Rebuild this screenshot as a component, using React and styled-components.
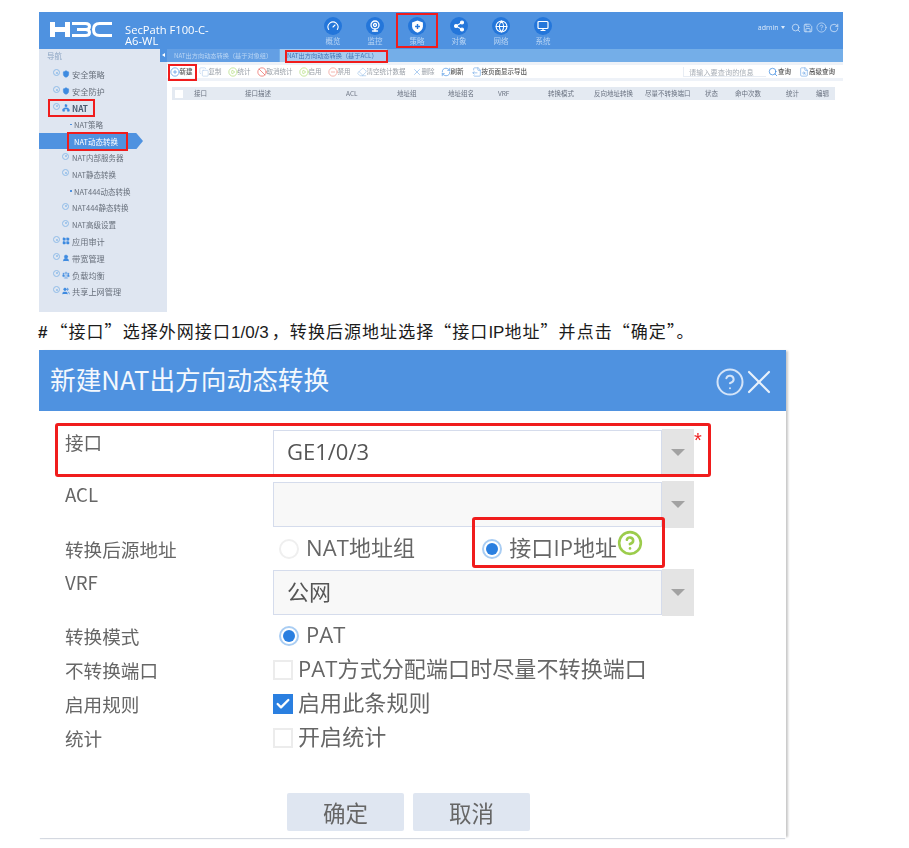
import styled, { createGlobalStyle } from "styled-components";
import {
  Ban,
  Check,
  CircleHelp,
  CirclePlay,
  CirclePlus,
  CircleMinus,
  Copy,
  Eraser,
  FileOutput,
  FileSearch,
  Gauge,
  Globe,
  Monitor,
  Network,
  RefreshCw,
  RotateCw,
  Save,
  Scale,
  Search,
  Share2,
  Shield,
  LayoutGrid,
  Users,
  UserRound,
  Webcam,
  X,
} from "lucide-react";

const CJK = `"Noto Sans CJK SC", "Noto Sans", sans-serif`;
const UI = `"Open Sans", "Noto Sans CJK SC", sans-serif`;

const Global = createGlobalStyle`
  body {
    margin: 0;
    background: #fff;
    font-family: ${UI};
  }
`;

const Page = styled.div`
  width: 909px;
  height: 848px;
  padding: 12px 0 0 39px;
  box-sizing: border-box;
  overflow: hidden;
`;

const Mark = styled.div`
  position: absolute;
  left: ${(p) => p.$x}px;
  top: ${(p) => p.$y}px;
  width: ${(p) => p.$w}px;
  height: ${(p) => p.$h}px;
  box-sizing: border-box;
  border: ${(p) => p.$b || 2}px solid #f01c1c;
  border-radius: ${(p) => p.$r || 0}px;
  pointer-events: none;
`;

/* top screenshot */
const Shot = styled.div`
  position: relative;
  width: 804px;
  height: 300px;
  filter: blur(0.35px);
`;

const Head = styled.header`
  height: 37px;
  background: #4f92e0;
  display: flex;
  align-items: flex-start;
  color: #fff;
`;

const Logo = styled.svg`
  width: 62px;
  height: 15px;
  margin: 10px 13px 0 11px;
  flex: none;
`;

const Product = styled.div`
  width: 187px;
  flex: none;
  margin-top: 12px;
  font-size: 11.2px;
  line-height: 11px;
`;

const Nav = styled.nav`
  display: flex;
`;

const NavItem = styled.div`
  width: 42px;
  display: flex;
  flex-direction: column;
  align-items: center;
  padding-top: 5px;
  font-family: ${CJK};
  font-size: 7.5px;
  line-height: 9px;
  color: #b9d5f4;
`;

const NavDisc = styled.div`
  width: 18px;
  height: 18px;
  border-radius: 50%;
  background: #2476da;
  display: flex;
  align-items: center;
  justify-content: center;
  margin-bottom: 1px;
`;

const HeadTools = styled.div`
  margin-left: auto;
  padding: 10px 4px 0 0;
  display: flex;
  align-items: center;
  gap: 2.5px;
  font-size: 7px;
  line-height: 9px;
  color: #dbe9fa;
`;

const Caret = styled.span`
  width: 0;
  height: 0;
  border: 2.5px solid transparent;
  border-top: 3px solid #dbe9fa;
  border-bottom: 0;
  margin: 0 3px 0 0;
`;

const Body = styled.div`
  display: flex;
  height: 263px;
`;

const Side = styled.aside`
  width: 128px;
  flex: none;
  background: #dfe6f1;
`;

const SideTitle = styled.div`
  height: 13px;
  padding-left: 8px;
  font-family: ${CJK};
  font-size: 7.5px;
  line-height: 13px;
  color: #8ea6c4;
  position: relative;
`;

const Handle = styled.span`
  position: absolute;
  right: 0;
  top: 0;
  width: 7px;
  height: 13px;
  background: #4f92e0;
  &::after {
    content: "";
    position: absolute;
    left: 2px;
    top: 4px;
    border: 2.5px solid transparent;
    border-right: 3px solid #fff;
    border-left: 0;
  }
`;

const Tree = styled.div`
  padding-top: 4px;
`;

const TreeRow = styled.div`
  height: 16.7px;
  display: flex;
  align-items: center;
  padding-left: ${(p) => p.$indent}px;
  font-family: ${CJK};
  font-size: ${(p) => (p.$level === 0 ? 8.2 : 7.5)}px;
  font-weight: ${(p) => (p.$bold ? 700 : 400)};
  color: ${(p) => (p.$active ? "#fff" : p.$bold ? "#4a5a70" : "#68707c")};
  background: ${(p) => (p.$active ? "#4f92e0" : "transparent")};
  width: ${(p) => (p.$active ? "104px" : "auto")};
  box-sizing: border-box;
  clip-path: ${(p) =>
    p.$active
      ? "polygon(0 0, 97px 0, 104px 50%, 97px 100%, 0 100%)"
      : "none"};
`;

const Ring = styled.span`
  width: 7px;
  height: 7px;
  border: 1px solid #90bce8;
  border-radius: 50%;
  box-sizing: border-box;
  margin-right: ${(p) => p.$gap}px;
  margin-top: -3px;
  position: relative;
  flex: none;
  &::after {
    content: "";
    position: absolute;
    left: 1.5px;
    top: 1.5px;
    width: 2px;
    height: 2px;
    background: #90bce8;
    border-radius: 50%;
  }
`;

const Dot = styled.span`
  width: 1.5px;
  height: 1.5px;
  background: #4f92e0;
  margin-right: 2.5px;
  flex: none;
`;

const TreeIcon = styled.span`
  display: flex;
  margin-right: 2px;
  flex: none;
`;

const Main = styled.main`
  flex: 1;
  background: #eef2f8;
  display: flex;
  flex-direction: column;
`;

const TabBar = styled.div`
  height: 13px;
  background: #74aee8;
  display: flex;
  font-family: ${CJK};
  font-size: 6.2px;
  line-height: 13px;
`;

const Tab = styled.div`
  width: ${(p) => p.$w}px;
  padding-left: ${(p) => p.$pad}px;
  box-sizing: border-box;
  background: ${(p) => (p.$on ? "#a9ccf0" : "#639fe4")};
  color: ${(p) => (p.$on ? "#4373b4" : "#b9d5f4")};
  margin-right: 1px;
`;

const Toolbar = styled.div`
  height: 13px;
  margin-top: 3px;
  background: #fff;
  display: flex;
  align-items: center;
  gap: 6px;
  padding: 0 8px 0 2.5px;
`;

const Tool = styled.div`
  display: flex;
  align-items: center;
  font-family: ${CJK};
  font-size: 6.5px;
  line-height: 9px;
  color: ${(p) => (p.$strong ? "#555" : "#9aa0a8")};
  font-weight: ${(p) => (p.$strong ? 500 : 400)};
  margin-left: ${(p) => p.$ml || 0};
`;

const SearchBox = styled.div`
  width: 83px;
  height: 10px;
  margin-left: auto;
  margin-right: -4px;
  padding-left: 5px;
  box-sizing: border-box;
  font-family: ${CJK};
  font-size: 7.2px;
  line-height: 10px;
  color: #aab0b8;
  border: solid #e8edf4;
  border-width: 0 0 1px 1px;
`;

const Panel = styled.div`
  flex: 1;
  margin-top: 3px;
  background: #fff;
  padding: 6px 8px 0 5px;
`;

const TableHead = styled.div`
  height: 13px;
  background: #e4eaf2;
  display: grid;
  grid-template-columns: 22px 51px 101px 51px 51px 50px 50px 46px 51px 60px 30px 51px 30px 1fr;
  align-items: center;
  font-family: ${CJK};
  font-size: 6.5px;
  line-height: 9px;
  color: #6a7280;
`;

const HeadBox = styled.span`
  width: 8px;
  height: 8px;
  background: #fff;
  margin-left: 3px;
`;

/* caption */
const Caption = styled.p`
  margin: 0 0 0 -1px;
  height: 38px;
  font-family: ${CJK};
  font-size: 17px;
  letter-spacing: 1.05px;
  line-height: 38px;
  color: #1b1b1b;
  white-space: nowrap;
`;

const Latin = styled.span`
  font-family: "Liberation Sans", sans-serif;
  letter-spacing: 0;
  font-weight: ${(p) => (p.$bold ? 700 : 400)};
  margin-right: ${(p) => p.$mr || 0}px;
`;

/* dialog */
const Dialog = styled.section`
  position: relative;
  width: 747px;
  height: 488px;
  background: #fff;
  box-shadow: 3px 0 2px -1px #c9c9c9, 0 2px 1px -1px #d5dae2;
  filter: blur(0.25px);
`;

const DialogHead = styled.header`
  height: 61px;
  background: #4f92e0;
  color: #f4f8fd;
  display: flex;
  align-items: center;
  padding: 0 7.5px 0 11px;
  font-family: ${CJK};
  font-size: 25.7px;
`;

const DialogTitle = styled.h2`
  margin: -5px 0 0;
  font-size: inherit;
  font-weight: 400;
`;

const HeadIcons = styled.div`
  margin-left: auto;
  margin-top: 3px;
  display: flex;
  align-items: center;
`;

const CloseIcon = styled(X)`
  margin-left: -6px;
`;

const Form = styled.div`
  padding: 19px 0 0 26px;
`;

const Row = styled.div`
  display: grid;
  grid-template-columns: 208px 1fr;
  height: ${(p) => p.$h}px;
  margin-top: ${(p) => p.$mt || 0}px;
  align-items: ${(p) => (p.$top ? "start" : "center")};
`;

const Label = styled.div`
  font-family: ${CJK};
  font-size: 18.6px;
  line-height: 24px;
  color: #666;
`;

const Select = styled.div`
  display: flex;
  align-items: flex-start;
`;

const Input = styled.div`
  width: 389px;
  height: 45px;
  box-sizing: border-box;
  background: ${(p) => (p.$disabled ? "#f8f8f8" : "#fff")};
  border: 1px solid #d5dcec;
  padding-left: 13px;
  font-family: ${UI};
  font-size: 22px;
  line-height: 41px;
  color: #555;
`;

const Drop = styled.div`
  width: 32px;
  height: 47px;
  margin-top: -1px;
  background: #e4e4e4;
  display: flex;
  align-items: center;
  justify-content: center;
  &::after {
    content: "";
    border: 7px solid transparent;
    border-top: 7px solid #a2a2a2;
    border-bottom: 0;
  }
`;

const Star = styled.span`
  color: #ee2222;
  font-family: "Liberation Sans", sans-serif;
  font-size: 20px;
  line-height: 20px;
`;

const Options = styled.div`
  display: flex;
  align-items: center;
  padding-left: ${(p) => p.$pad || 0}px;
`;

const Radio = styled.span`
  width: 20px;
  height: 20px;
  flex: none;
  box-sizing: border-box;
  border-radius: 50%;
  border: 2px solid ${(p) => (p.$on ? "#a9cdf3" : "#efefef")};
  display: flex;
  align-items: center;
  justify-content: center;
  margin-right: 7px;
  &::after {
    content: "";
    width: 12px;
    height: 12px;
    border-radius: 50%;
    background: ${(p) => (p.$on ? "#2a7fe0" : "transparent")};
  }
`;

const Box = styled.span`
  width: 20px;
  height: 20px;
  flex: none;
  box-sizing: border-box;
  background: ${(p) => (p.$on ? "#2a7fe0" : "#fff")};
  border: 2px solid ${(p) => (p.$on ? "#2a7fe0" : "#ececec")};
  display: flex;
  align-items: center;
  justify-content: center;
  margin-right: 5px;
`;

const OptText = styled.span`
  font-family: ${UI};
  font-size: 22px;
  letter-spacing: 0.1px;
  line-height: 30px;
  color: #666;
  margin-right: ${(p) => p.$mr || 0}px;
  margin-bottom: 4px;
`;

const GreenHelp = styled(CircleHelp)`
  margin: -12px 0 0 0;
`;

const Buttons = styled.div`
  display: flex;
  gap: 9px;
  margin: 38px 0 0 222px;
`;

const Btn = styled.div`
  width: 117px;
  height: 38px;
  background: #dfe6f1;
  border-radius: 2px;
  text-align: center;
  font-family: ${CJK};
  font-size: 22.5px;
  line-height: 38px;
  color: #666;
`;

const ShieldGlyph = () => (
  <svg width="13" height="13" viewBox="0 0 24 24">
    <path d="M12 1L22 4.5V12C22 17.5 17.5 21.5 12 23.5C6.5 21.5 2 17.5 2 12V4.5Z" fill="#fff" />
    <path d="M12 7.5V16.5M7.5 12H16.5" stroke="#2476da" strokeWidth="2.6" fill="none" />
  </svg>
);

const navItems = [
  { label: "概览", glyph: <Gauge size={12} color="#fff" strokeWidth={2.2} /> },
  { label: "监控", glyph: <Webcam size={12} color="#fff" strokeWidth={2.6} /> },
  { label: "策略", glyph: <ShieldGlyph /> },
  { label: "对象", glyph: <Share2 size={12} color="#fff" fill="#fff" strokeWidth={2.2} /> },
  { label: "网络", glyph: <Globe size={13} color="#fff" strokeWidth={2} /> },
  { label: "系统", glyph: <Monitor size={12} color="#fff" strokeWidth={2.4} /> },
];

const blue = "#3f8be0";

const tree = [
  { text: "安全策略", level: 0, Icon: Shield },
  { text: "安全防护", level: 0, Icon: Shield },
  { text: "NAT", level: 0, Icon: Network, bold: true },
  { text: "NAT策略", level: 2 },
  { text: "NAT动态转换", level: 2, active: true },
  { text: "NAT内部服务器", level: 1 },
  { text: "NAT静态转换", level: 1 },
  { text: "NAT444动态转换", level: 2 },
  { text: "NAT444静态转换", level: 1 },
  { text: "NAT高级设置", level: 1 },
  { text: "应用审计", level: 0, Icon: LayoutGrid },
  { text: "带宽管理", level: 0, Icon: UserRound },
  { text: "负载均衡", level: 0, Icon: Scale },
  { text: "共享上网管理", level: 0, Icon: Users },
];

const tools = [
  { text: "复制", Icon: Copy, color: "#b5cfee" },
  { text: "统计", Icon: CirclePlay, color: "#a6d86a" },
  { text: "取消统计", Icon: Ban, color: "#e8504a" },
  { text: "启用", Icon: CirclePlay, color: "#a6d86a" },
  { text: "禁用", Icon: CircleMinus, color: "#ee8a80" },
  { text: "清空统计数据", Icon: Eraser, color: "#9cc0e8" },
  { text: "删除", Icon: X, color: "#7fb0e8" },
  { text: "刷新", Icon: RefreshCw, color: "#3f8be0", dark: true },
  { text: "按页面显示导出", Icon: FileOutput, color: "#6ea6e6", dark: true, ml: "2px" },
];

const columns = ["接口", "接口描述", "ACL", "地址组", "地址组名", "VRF", "转换模式", "反向地址转换", "尽量不转换端口", "状态", "命中次数", "统计", "编辑"];

const indents = { 0: 14, 1: 23, 2: 31 };

const App = () => {
  return (
    <Page>
      <Global />
      <Shot>
        <Head>
          <Logo viewBox="0 0 62 15" fill="none" stroke="#fff">
            <path d="M2.5 0V15M17.5 0V15M2.5 7.5H17.5" strokeWidth="5" />
            <path
              d="M22 1.5H35.5Q39.5 1.5 39.5 4.5Q39.5 7.5 35.5 7.5H27M35.5 7.5Q39.5 7.5 39.5 10.5Q39.5 13.5 35.5 13.5H22"
              strokeWidth="3"
            />
            <path d="M62 1.5H49.5Q43.5 1.5 43.5 7.5Q43.5 13.5 49.5 13.5H62" strokeWidth="3" />
          </Logo>
          <Product>
            SecPath F100-C-
            <br />
            A6-WL
          </Product>
          <Nav>
            {navItems.map(({ label, glyph }) => (
              <NavItem key={label}>
                <NavDisc>{glyph}</NavDisc>
                {label}
              </NavItem>
            ))}
          </Nav>
          <HeadTools>
            admin
            <Caret />
            <Search size={10} strokeWidth={1.8} />
            <Save size={10} strokeWidth={1.8} />
            <CircleHelp size={11} strokeWidth={1.4} />
            <RotateCw size={10} strokeWidth={1.8} />
          </HeadTools>
        </Head>
        <Body>
          <Side>
            <SideTitle>
              导航
              <Handle />
            </SideTitle>
            <Tree>
              {tree.map((item) => (
                <TreeRow
                  key={item.text}
                  $level={item.level}
                  $indent={indents[item.level]}
                  $bold={item.bold}
                  $active={item.active}
                >
                  {item.level === 2 ? <Dot /> : <Ring $gap={item.level === 0 ? 2 : 3} />}
                  {item.Icon && (
                    <TreeIcon>
                      <item.Icon size={8} color={blue} fill={blue} strokeWidth={1.5} />
                    </TreeIcon>
                  )}
                  {item.text}
                </TreeRow>
              ))}
            </Tree>
          </Side>
          <Main>
            <TabBar>
              <Tab $w={112} $pad={7}>NAT出方向动态转换（基于对象组）</Tab>
              <Tab $w={107} $pad={7} $on>NAT出方向动态转换（基于ACL）</Tab>
            </TabBar>
            <Toolbar>
              <Tool $strong>
                <CirclePlus size={10} color="#3f8be0" strokeWidth={1.5} />
                新建
              </Tool>
              {tools.map(({ text, Icon, color, dark, ml }) => (
                <Tool key={text} $strong={dark} $ml={ml}>
                  <Icon size={10} color={color} strokeWidth={1.5} />
                  {text}
                </Tool>
              ))}
              <SearchBox>请输入要查询的信息</SearchBox>
              <Tool $strong>
                <Search size={10} color="#3f8be0" strokeWidth={1.8} />
                查询
              </Tool>
              <Tool $strong $ml="2px">
                <FileSearch size={10} color="#6ea6e6" strokeWidth={1.5} />
                高级查询
              </Tool>
            </Toolbar>
            <Panel>
              <TableHead>
                <HeadBox />
                {columns.map((c, i) => (
                  <span key={i}>{c}</span>
                ))}
              </TableHead>
            </Panel>
          </Main>
        </Body>
        <Mark $x={357} $y={1} $w={42} $h={35} />
        <Mark $x={246} $y={38} $w={103} $h={13} />
        <Mark $x={129} $y={52} $w={29} $h={17} />
        <Mark $x={9} $y={87} $w={47} $h={18} />
        <Mark $x={28} $y={120} $w={61} $h={19} />
      </Shot>

      <Caption>
        <Latin $bold $mr={3}>#</Latin>“接口”选择外网接口<Latin $mr={3}>1/0/3</Latin>，转换后源地址选择“接口<Latin>IP</Latin>地址”并点击“确定”。
      </Caption>

      <Dialog>
        <DialogHead>
          <DialogTitle>新建NAT出方向动态转换</DialogTitle>
          <HeadIcons>
            <CircleHelp size={30} color="#d4e4f8" strokeWidth={1.6} />
            <CloseIcon size={40} color="#e8f1fb" strokeWidth={1.3} />
          </HeadIcons>
        </DialogHead>
        <Form>
          <Row $h={52} $top>
            <Label>接口</Label>
            <Select>
              <Input>GE1/0/3</Input>
              <Drop />
              <Star>*</Star>
            </Select>
          </Row>
          <Row $h={45} $top>
            <Label>ACL</Label>
            <Select>
              <Input $disabled />
              <Drop />
            </Select>
          </Row>
          <Row $h={43}>
            <Label>转换后源地址</Label>
            <Options $pad={6}>
              <Radio />
              <OptText $mr={67}>NAT地址组</OptText>
              <Radio $on />
              <OptText>接口IP地址</OptText>
              <GreenHelp size={26} color="#9ccc4c" strokeWidth={2.4} />
            </Options>
          </Row>
          <Row $h={45} $top>
            <Label>VRF</Label>
            <Select>
              <Input $disabled>公网</Input>
              <Drop />
            </Select>
          </Row>
          <Row $h={34} $mt={4}>
            <Label>转换模式</Label>
            <Options $pad={6}>
              <Radio $on />
              <OptText>PAT</OptText>
            </Options>
          </Row>
          <Row $h={34}>
            <Label>不转换端口</Label>
            <Options>
              <Box />
              <OptText>PAT方式分配端口时尽量不转换端口</OptText>
            </Options>
          </Row>
          <Row $h={34}>
            <Label>启用规则</Label>
            <Options>
              <Box $on>
                <Check size={16} color="#fff" strokeWidth={3.5} />
              </Box>
              <OptText>启用此条规则</OptText>
            </Options>
          </Row>
          <Row $h={34}>
            <Label>统计</Label>
            <Options>
              <Box />
              <OptText>开启统计</OptText>
            </Options>
          </Row>
          <Buttons>
            <Btn>确定</Btn>
            <Btn>取消</Btn>
          </Buttons>
        </Form>
        <Mark $x={16} $y={73} $w={656} $h={54} $b={3} $r={3} />
        <Mark $x={433} $y={167} $w={193} $h={51} $b={3} $r={3} />
      </Dialog>
    </Page>
  );
};

export default App;
